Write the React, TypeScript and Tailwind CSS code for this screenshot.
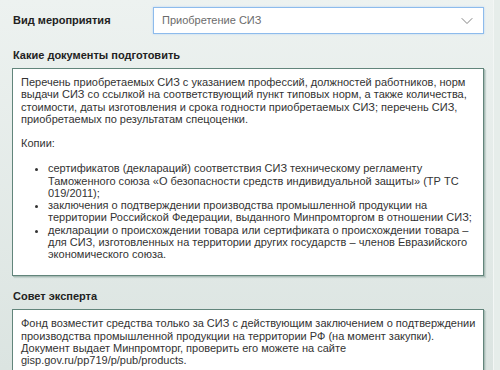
import { ChevronDown } from "lucide-react";

const font = { fontFamily: '"Liberation Sans", Arial, sans-serif' };

const docs = [
  "сертификатов (деклараций) соответствия СИЗ техническому регламенту Таможенного союза «О безопасности средств индивидуальной защиты» (ТР ТС 019/2011);",
  "заключения о подтверждении производства промышленной продукции на территории Российской Федерации, выданного Минпромторгом в отношении СИЗ;",
  "декларации о происхождении товара или сертификата о происхождении товара – для СИЗ, изготовленных на территории других государств – членов Евразийского экономического союза.",
];

const App = () => {
  return (
    <div
      className="w-[500px] h-[370px] overflow-hidden flex bg-gradient-to-b from-[#edf2f0] to-[#dbe4e1] text-[#333]"
      style={font}
    >
      <div className="w-[494px] shrink-0 border-r border-[#f3f6f5] pl-3 pr-[9px] pt-[7px]">
        <div className="flex items-center">
          <div className="w-[141px] pl-[1px] text-[11px] font-bold text-[#222]">
            Вид мероприятия
          </div>
          <div className="w-[331px] h-[27px] flex items-center justify-between pl-2 pr-[6px] bg-white border border-[#8dbbec] shadow-[0_0_2px_#b9d6f5] text-[11px] text-[#6b6b6b]">
            <span>Приобретение СИЗ</span>
            <ChevronDown size={20} strokeWidth={1.1} className="text-[#777]" />
          </div>
        </div>

        <div className="mt-[14px] pl-[1px] text-[11px] leading-[14px] font-bold text-[#222]">
          Какие документы подготовить
        </div>
        <div className="mt-[6px] w-[472px] bg-white border border-[#62857b] shadow-[1px_1px_0_#a9bcb6,2px_2px_1px_#c5d3cf] px-[8px] pt-[7px] pb-[15px] text-[11px] leading-[12.25px]">
          <p>
            Перечень приобретаемых СИЗ с указанием профессий, должностей
            работников, норм выдачи СИЗ со ссылкой на соответствующий пункт
            типовых норм, а также количества, стоимости, даты изготовления и
            срока годности приобретаемых СИЗ; перечень СИЗ, приобретаемых по
            результатам спецоценки.
          </p>
          <p className="mt-[12px]">Копии:</p>
          <ul className="mt-[13px] ml-[27px] list-disc">
            {docs.map((d) => (
              <li key={d}>{d}</li>
            ))}
          </ul>
        </div>

        <div className="mt-[13px] pl-[1px] text-[11px] leading-[14px] font-bold text-[#222]">
          Совет эксперта
        </div>
        <div className="mt-[6px] w-[472px] bg-white border border-[#62857b] shadow-[1px_1px_0_#a9bcb6,2px_2px_1px_#c5d3cf] px-[8px] pt-[7px] pb-[8px] text-[11px] leading-[12.25px]">
          <p className="whitespace-nowrap">
            Фонд возместит средства только за СИЗ с действующим заключением о
            подтверждении
            <br />
            производства промышленной продукции на территории РФ (на момент
            закупки).
            <br />
            Документ выдает Минпромторг, проверить его можете на сайте
            <br />
            gisp.gov.ru/pp719/p/pub/products.
          </p>
        </div>
      </div>
      <div className="flex-1 bg-[#e6edea]" />
    </div>
  );
};

export default App;
